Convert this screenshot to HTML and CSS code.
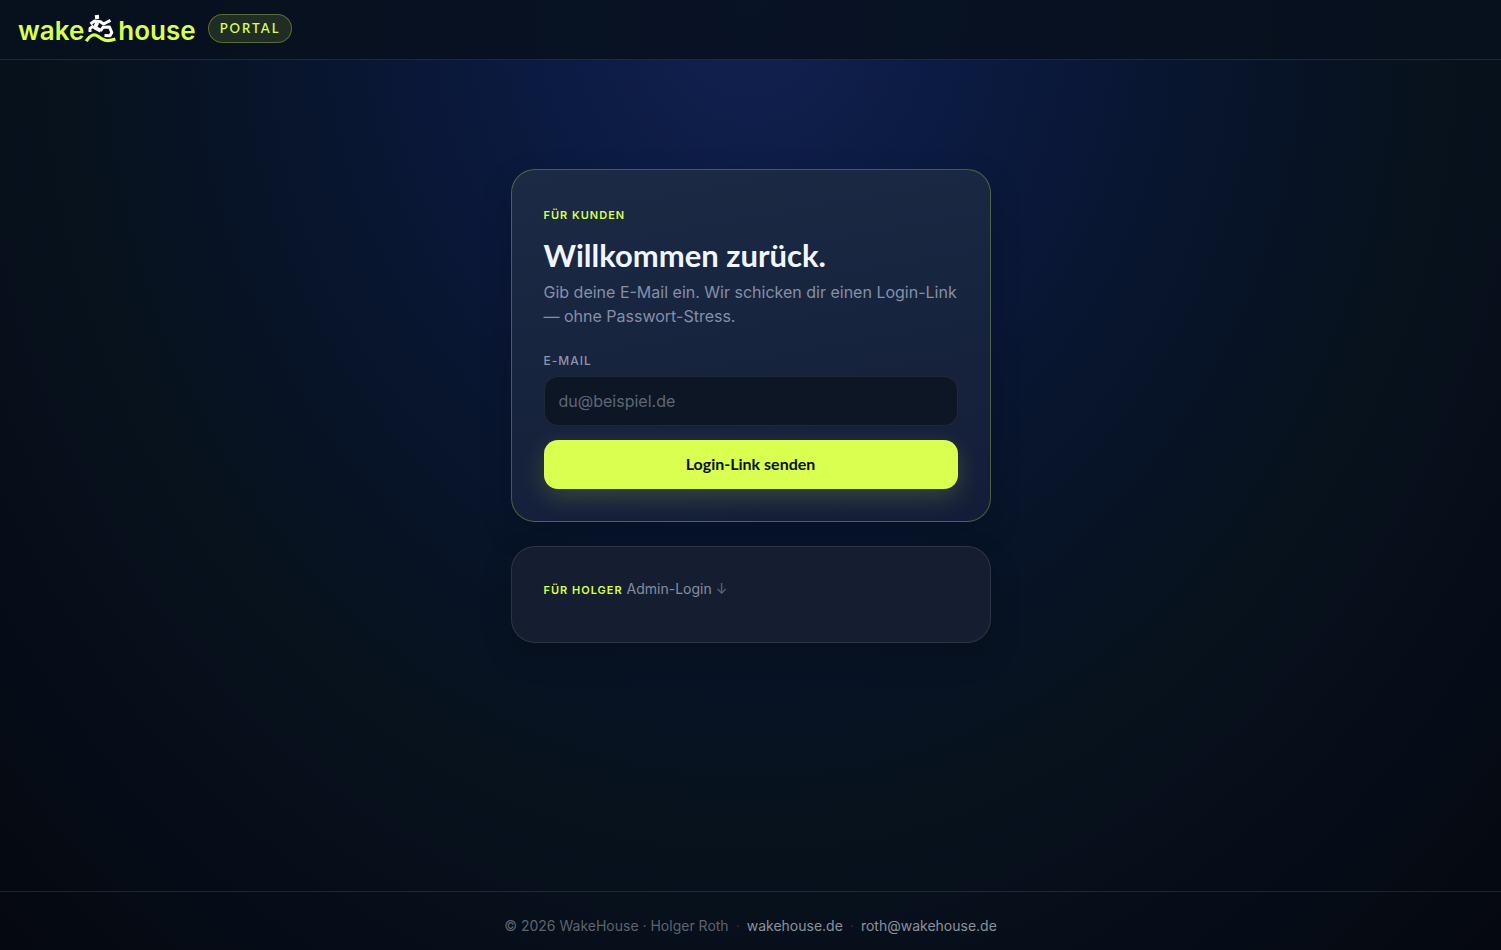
FILE: index.html
```html
<!DOCTYPE html>
<html lang="de">
<head>
    <meta charset="UTF-8">
    <meta name="viewport" content="width=device-width, initial-scale=1.0">
    <title>WakeHouse Portal</title>
    <link rel="stylesheet" href="styles.css">
</head>
<body>
    <header class="topbar">
        <a class="logo" href="#">
            <span>wake</span>
            <svg class="logo_rider" viewBox="0 0 32 30" width="32" height="30" fill="none" stroke-linejoin="round" aria-hidden="true">
                <path d="M9.7 1.2l4.1-.4.5 4-4.1.5z" fill="#fff"/>
                <path d="M5 18v-3.500L8.500 12M5.500 10L9.500 7l6 .8 3 2.200 7-3.600" stroke="#fff" stroke-width="3"/>
                <path d="M12.500 8.500L9.800 13.500l6 3.300" stroke="#fff" stroke-width="3.800"/>
                <path d="M15.500 17l2.500-3.800 6.500-.2 2.300 5.500-1.800 3.300-5.500-.3" stroke="#fff" stroke-width="3"/>
                <path d="M1.200 27.200C5 21 9 19.500 13 22.300c4 3.200 8 6.200 17.400 2.700" stroke="#d9ff50" stroke-width="3.200"/>
            </svg>
            <span>house</span>
        </a>
        <span class="badge">PORTAL</span>
    </header>

    <main class="container">
        <section class="card card_main">
            <span class="eyebrow">FÜR KUNDEN</span>
            <h1>Willkommen zurück.</h1>
            <p class="intro">Gib deine E-Mail ein. Wir schicken dir einen Login-Link — ohne Passwort-Stress.</p>
            <form class="form_box">
                <label for="email">E-MAIL</label>
                <input type="email" id="email" name="email" placeholder="du@beispiel.de" required>
                <button type="submit">Login-Link senden</button>
            </form>
        </section>

        <details class="card card_admin">
            <summary><span class="eyebrow">FÜR HOLGER</span> Admin-Login <span class="arrow">↓</span></summary>
        </details>
    </main>

    <footer class="footer">
        <span>© 2026 WakeHouse · Holger Roth</span>
        <span class="dot">·</span>
        <a href="#">wakehouse.de</a>
        <span class="dot">·</span>
        <a href="mailto:roth@wakehouse.de">roth@wakehouse.de</a>
    </footer>
</body>
</html>
```
FILE: styles.css
```css
*, *:after, *:before {
    box-sizing: border-box;
}

body {
    font-family: Inter, "Open Sans", sans-serif;
    font-size: 16px;
    line-height: 24px;
    margin: 0;
    min-height: 100vh;
    display: flex;
    flex-direction: column;
    color: #f1f5ff;
    background: #04070f radial-gradient(ellipse 66% 125% at 50% 0%, #132152 0%, #0c1b42 20%, #0a1738 34%, #071428 52%, #07121d 70%, #060d19 88%, #05080f 110%);
}

a {
    color: inherit;
    text-decoration: none;
}

.topbar {
    display: flex;
    align-items: center;
    gap: 12px;
    height: 60px;
    padding: 0 18px 2px;
    background: rgba(7, 17, 29, 0.85);
    border-bottom: 1px solid rgba(255, 255, 255, 0.1);
}

.logo {
    display: flex;
    align-items: center;
    gap: 1px;
    font-size: 26px;
    font-weight: 600;
    color: #d9ff50;
}

.logo span {
    padding-top: 4px;
}

.badge {
    padding: 2px 11px;
    font-family: Lato, sans-serif;
    font-size: 13px;
    line-height: 23px;
    font-weight: 600;
    letter-spacing: 2px;
    color: #d9ff50;
    background: rgba(217, 255, 80, 0.12);
    border: 1px solid rgba(217, 255, 80, 0.3);
    border-radius: 999px;
}

.container {
    flex: 1;
    display: flex;
    flex-direction: column;
    gap: 24px;
    width: 100%;
    max-width: 512px;
    margin: 0 auto;
    padding: 109px 16px 64px;
}

.card {
    padding: 32px;
    border: 1px solid rgba(255, 255, 255, 0.1);
    border-radius: 24px;
    background: #151e30;
    box-shadow: 0 12px 32px rgba(0, 0, 0, 0.2);
}

.card_main {
    border-color: rgba(217, 255, 80, 0.28);
    background: linear-gradient(170deg, #1c2a45 0%, #17243e 50%, #141d38 100%);
}

.card_admin {
    padding-bottom: 42px;
}

.eyebrow {
    font-size: 11px;
    font-weight: 600;
    letter-spacing: 1px;
    color: #d9ff50;
}

.card_main .eyebrow {
    display: block;
    line-height: 26px;
}

h1 {
    margin: 8px 0 6px;
    font-family: Lato, sans-serif;
    font-size: 31px;
    line-height: 38px;
    font-weight: 700;
}

.intro {
    margin: 0 0 24px;
    color: #8590a7;
}

.form_box {
    display: flex;
    flex-direction: column;
}

.form_box label {
    margin-bottom: 6px;
    font-size: 12px;
    line-height: 18px;
    font-weight: 500;
    letter-spacing: 1px;
    color: #8d97ab;
}

.form_box input {
    width: 100%;
    height: 50px;
    margin: 0 0 14px;
    padding: 0 14px;
    font: inherit;
    color: #f1f5ff;
    background: #0d1625;
    border: 1px solid rgba(255, 255, 255, 0.08);
    border-radius: 14px;
}

.form_box input::placeholder {
    color: #5e6776;
}

.form_box button {
    height: 49px;
    padding: 0 16px 2px;
    font-family: Lato, sans-serif;
    font-size: 16px;
    font-weight: 700;
    cursor: pointer;
    color: #081018;
    background: #d9ff50;
    border: 0;
    border-radius: 14px;
    box-shadow: 0 8px 24px rgba(217, 255, 80, 0.18);
}

summary {
    list-style: none;
    cursor: pointer;
    font-size: 14px;
    line-height: 20px;
    color: #858ea0;
}

.arrow {
    color: #5e6878;
}

.footer {
    display: flex;
    justify-content: center;
    gap: 7px;
    padding: 22px 16px 12px;
    font-size: 14px;
    color: #5c6470;
    border-top: 1px solid rgba(255, 255, 255, 0.1);
}

.footer a {
    color: #8b929e;
}

.dot {
    color: #303846;
}
```
